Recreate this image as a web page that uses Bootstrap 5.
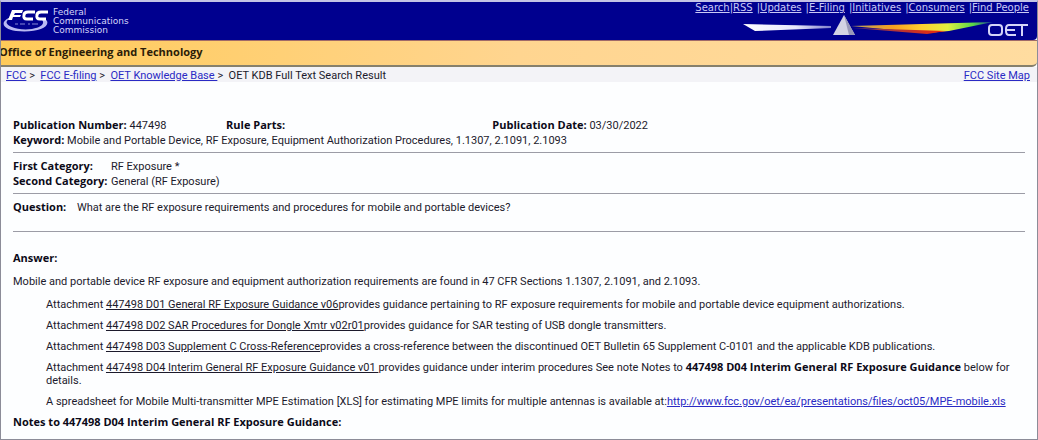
<!DOCTYPE html>
<html lang="en">
<head>
<meta charset="utf-8">
<meta name="viewport" content="width=device-width, initial-scale=1">
<title>OET KDB Full Text Search Result</title>
<link href="https://cdn.jsdelivr.net/npm/bootstrap@5.3.0/dist/css/bootstrap.min.css" rel="stylesheet">
<style>
body{font-family:Roboto,"DejaVu Sans",sans-serif;font-size:11px;line-height:15px;color:#1c1a2c;background:#fdfeff}
b,h1,h2{font-family:"Open Sans","DejaVu Sans",sans-serif}
b{line-height:10px}
.frame{border:1px solid #8c8c98;border-top:2px solid #c3c3e6;min-height:100vh}
.masthead{background:#00008f;height:38px;border-radius:0 0 4px 0}
.masthead a{color:#c9c9f6}
.agency{font-family:"DejaVu Sans",sans-serif;font-size:9px;line-height:9px;color:#d5d5f8;padding-top:2px}
.toplinks{font-family:"DejaVu Sans",sans-serif;font-size:10px;line-height:12px}
.prism{margin-top:-2px}
.sep{color:#c9c9f6}
.office{background:linear-gradient(90deg,#ffca58,#ffd590 50%,#ffdca0);height:27px;border-top:1px solid #a06a68;border-bottom:2px solid #86806c;border-radius:0 0 5px 0;color:#2b1c08}
.office h1{font-size:11px;line-height:22px;margin-left:-2px}
.crumbs{background:#f3f3f7;height:15px;padding:1px 7px 0 5px}
a{color:#2a2ac4}
.content-area{padding:36px 12px 4px}
.content-area b,.content-area h2{color:#0c0a18}
.content-area hr{margin:4px 0 6px;border-color:#9c9ca6;opacity:1}
.content-area .rule-end{margin:16px 0 18px}
.record{display:grid;grid-template-columns:4fr 5fr 10fr}
.categories b{width:98px;line-height:14px}
.doc{color:#1c1a2c}
.content-area h2{font-size:11px;line-height:15px;font-weight:700}
.lead-in{margin:9px 0}
.attachments{padding-left:33px;margin-bottom:6px}
.attachments p{margin-bottom:8px;line-height:13px}
.attachments p:last-child{margin-bottom:0}
</style>
</head>
<body>
<div class="frame overflow-hidden">
<header class="masthead d-flex justify-content-between">
  <div class="d-flex align-items-start gap-1 pt-1">
    <svg width="48" height="30" viewBox="0 0 48 30" aria-label="FCC logo" role="img">
      <path d="M10 11C-1 15 0 23 15 25C34 27 49 22 46 15C45 13 42 12 39 12C44 15 44 21 31 23C15 25 3 19 6 15C7 13 9 12 10 11Z" fill="#b9b9f2"/>
      <path d="M11 4H22L21 7H14L13 9H20L19 11H12L11 14H7Z" fill="#fff"/>
      <path d="M34 6H27Q23 6 23 9Q22 13 26 13H32M47 6H40Q36 6 36 9Q35 13 39 13H45" fill="none" stroke="#fff" stroke-width="3"/>
      <path d="M14 18h3m2 0h5m3 0h2m2 0h6" stroke="#4444b2" stroke-width="2"/>
    </svg>
    <div class="agency">Federal<br>Communications<br>Commission</div>
  </div>
  <div class="pe-2">
    <nav class="toplinks d-flex justify-content-end text-nowrap" aria-label="Site">
      <a href="#">Search</a><span class="sep">|</span><a href="#">RSS</a><span class="sep ps-1">|</span><a href="#">Updates</a><span class="sep ps-1">|</span><a href="#">E-Filing</a><span class="sep ps-1">|</span><a href="#">Initiatives</a><span class="sep ps-1">|</span><a href="#">Consumers</a><span class="sep ps-1">|</span><a href="#">Find People</a>
    </nav>
    <div class="prism d-flex justify-content-end">
      <svg width="288" height="26" viewBox="0 0 288 26" role="img" aria-label="OET prism">
        <defs>
          <linearGradient id="ray"><stop offset="0" stop-color="#fff"/><stop offset=".6" stop-color="#e8e8fc"/><stop offset="1" stop-color="#8080cc"/></linearGradient>
          <linearGradient id="spectrum"><stop offset="0" stop-color="#b8a060"/><stop offset=".3" stop-color="#f8a020"/><stop offset=".5" stop-color="#ffd030"/><stop offset=".68" stop-color="#e0f040"/><stop offset=".86" stop-color="#58d848"/><stop offset="1" stop-color="#1838a0"/></linearGradient>
          <linearGradient id="red"><stop offset="0" stop-color="#804060"/><stop offset="1" stop-color="#f02808"/></linearGradient>
        </defs>
        <path d="M2 12L90 14V16L14 19Z" fill="url(#ray)"/>
        <path d="M110 14L252 10L208 19L186 21Z" fill="url(#spectrum)"/>
        <path d="M112 16L205 19L186 22Z" fill="url(#red)"/>
        <path d="M103 3L92 23H114Z" fill="#d3d3e4"/><path d="M103 3L108 23H114Z" fill="#9999b9"/>
        <path d="M251 13H258Q261 13 261 16V20Q261 23 258 23H251Q248 23 248 20V16Q248 13 251 13ZM275 13H268Q265 13 265 17V19Q265 23 268 23H275M265 18H274M275 13H287M281 13V24" fill="none" stroke="#d5d5f8" stroke-width="2"/>
      </svg>
    </div>
  </div>
</header>
<div class="office"><h1 class="fw-bold mb-0">Office of Engineering and Technology</h1></div>
<div class="crumbs d-flex justify-content-between">
  <nav aria-label="Breadcrumb"><a href="#">FCC</a> &gt;&nbsp; <a href="#">FCC E-filing</a> &gt;&nbsp; <a href="#">OET Knowledge Base </a>&gt;&nbsp; OET KDB Full Text Search Result</nav>
  <a href="#">FCC Site Map</a>
</div>
<main class="content-area">
  <div class="record">
    <div><b>Publication Number:</b> 447498</div>
    <div><b>Rule Parts:</b></div>
    <div><b>Publication Date:</b> 03/30/2022</div>
  </div>
  <div><b>Keyword:</b> Mobile and Portable Device, RF Exposure, Equipment Authorization Procedures, 1.1307, 2.1091, 2.1093</div>
  <hr>
  <div class="categories">
    <div class="d-flex"><b>First Category:</b><span>RF Exposure *</span></div>
    <div class="d-flex"><b>Second Category:</b><span>General (RF Exposure)</span></div>
  </div>
  <hr>
  <div><b class="pe-2">Question:</b> What are the RF exposure requirements and procedures for mobile and portable devices?</div>
  <hr class="rule-end">
  <h2 class="mb-0">Answer:</h2>
  <p class="lead-in">Mobile and portable device RF exposure and equipment authorization requirements are found in 47 CFR Sections 1.1307, 2.1091, and 2.1093.</p>
  <div class="attachments">
    <p>Attachment <a class="doc" href="#">447498 D01 General RF Exposure Guidance v06</a>provides guidance pertaining to RF exposure requirements for mobile and portable device equipment authorizations.</p>
    <p>Attachment <a class="doc" href="#">447498 D02 SAR Procedures for Dongle Xmtr v02r01</a>provides guidance for SAR testing of USB dongle transmitters.</p>
    <p>Attachment <a class="doc" href="#">447498 D03 Supplement C Cross-Reference</a>provides a cross-reference between the discontinued OET Bulletin 65 Supplement C-0101 and the applicable KDB publications.</p>
    <p>Attachment <a class="doc" href="#">447498 D04 Interim General RF Exposure Guidance v01 </a>provides guidance under interim procedures See note Notes to <b>447498 D04 Interim General RF Exposure Guidance</b> below for details.</p>
    <p>A spreadsheet for Mobile Multi-transmitter MPE Estimation [XLS] for estimating MPE limits for multiple antennas is available at:<a href="#">http://www.fcc.gov/oet/ea/presentations/files/oct05/MPE-mobile.xls</a></p>
  </div>
  <h2 class="mb-0">Notes to 447498 D04 Interim General RF Exposure Guidance:</h2>
</main>
</div>
</body>
</html>
